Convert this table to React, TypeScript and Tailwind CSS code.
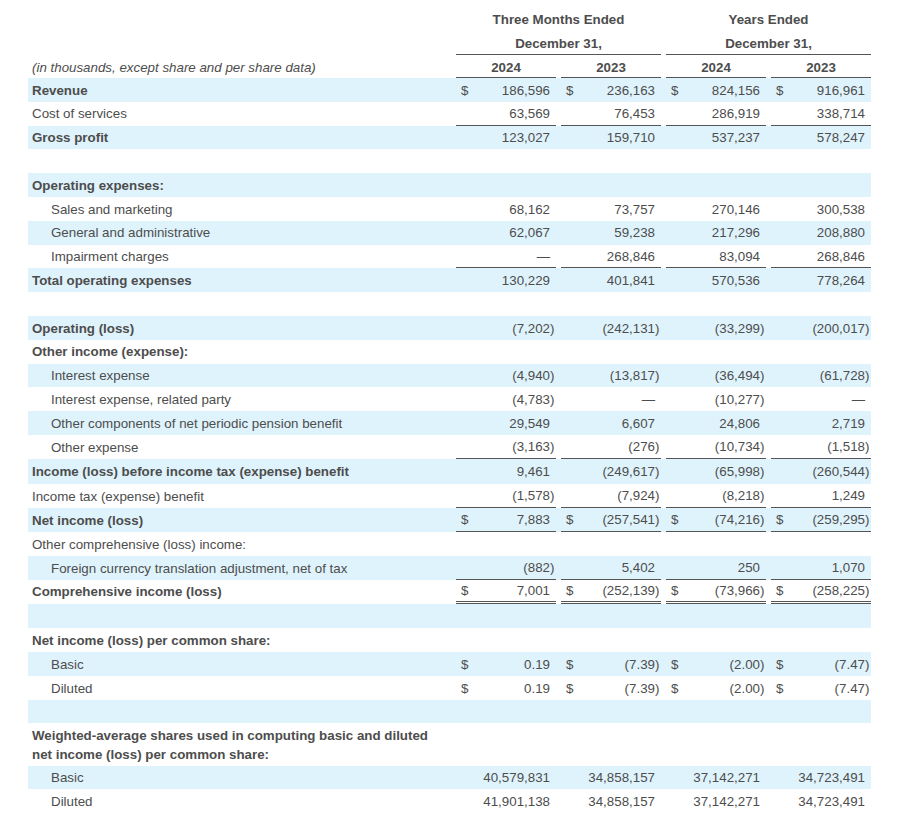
import React from 'react';

type Line = 'single' | 'double';

type Row = {
  label: string;
  bold?: boolean;
  indent?: boolean;
  dollar?: boolean;
  vals?: string[];
  line?: Line;
  h?: string;
};

const rows: Row[] = [
  { label: 'Revenue', bold: true, dollar: true, vals: ['186,596', '236,163', '824,156', '916,961'] },
  { label: 'Cost of services', vals: ['63,569', '76,453', '286,919', '338,714'], line: 'single' },
  { label: 'Gross profit', bold: true, vals: ['123,027', '159,710', '537,237', '578,247'] },
  { label: '' },
  { label: 'Operating expenses:', bold: true },
  { label: 'Sales and marketing', indent: true, vals: ['68,162', '73,757', '270,146', '300,538'] },
  { label: 'General and administrative', indent: true, vals: ['62,067', '59,238', '217,296', '208,880'] },
  { label: 'Impairment charges', indent: true, vals: ['—', '268,846', '83,094', '268,846'], line: 'single' },
  { label: 'Total operating expenses', bold: true, vals: ['130,229', '401,841', '570,536', '778,264'] },
  { label: '' },
  { label: 'Operating (loss)', bold: true, vals: ['(7,202)', '(242,131)', '(33,299)', '(200,017)'] },
  { label: 'Other income (expense):', bold: true },
  { label: 'Interest expense', indent: true, vals: ['(4,940)', '(13,817)', '(36,494)', '(61,728)'] },
  { label: 'Interest expense, related party', indent: true, vals: ['(4,783)', '—', '(10,277)', '—'] },
  { label: 'Other components of net periodic pension benefit', indent: true, vals: ['29,549', '6,607', '24,806', '2,719'] },
  { label: 'Other expense', indent: true, vals: ['(3,163)', '(276)', '(10,734)', '(1,518)'], line: 'single' },
  { label: 'Income (loss) before income tax (expense) benefit', bold: true, h: 'min-h-[24.8px]', vals: ['9,461', '(249,617)', '(65,998)', '(260,544)'] },
  { label: 'Income tax (expense) benefit', h: 'min-h-[24.8px]', vals: ['(1,578)', '(7,924)', '(8,218)', '1,249'], line: 'single' },
  { label: 'Net income (loss)', bold: true, dollar: true, vals: ['7,883', '(257,541)', '(74,216)', '(259,295)'], line: 'single' },
  { label: 'Other comprehensive (loss) income:' },
  { label: 'Foreign currency translation adjustment, net of tax', indent: true, vals: ['(882)', '5,402', '250', '1,070'], line: 'single' },
  { label: 'Comprehensive income (loss)', bold: true, dollar: true, vals: ['7,001', '(252,139)', '(73,966)', '(258,225)'], line: 'double' },
  { label: '', h: 'min-h-[24.2px]' },
  { label: 'Net income (loss) per common share:', bold: true, h: 'min-h-[24.2px]' },
  { label: 'Basic', indent: true, dollar: true, h: 'min-h-[24.2px]', vals: ['0.19', '(7.39)', '(2.00)', '(7.47)'] },
  { label: 'Diluted', indent: true, dollar: true, h: 'min-h-[24.2px]', vals: ['0.19', '(7.39)', '(2.00)', '(7.47)'] },
  { label: '', h: 'min-h-[23px]' },
  { label: 'Weighted-average shares used in computing basic and diluted net income (loss) per common share:', bold: true },
  { label: 'Basic', indent: true, vals: ['40,579,831', '34,858,157', '37,142,271', '34,723,491'] },
  { label: 'Diluted', indent: true, vals: ['41,901,138', '34,858,157', '37,142,271', '34,723,491'] },
];

const cols = 'grid grid-cols-[423px_100px_100px_100px_100px] gap-x-[5px]';

// one figure cell: "$" on the left, number right aligned, closing paren sits in a 6px slot
const NumCell = ({ value, dollar, line }: { value: string; dollar?: boolean; line?: Line }) => {
  const neg = value.startsWith('(');
  const body = neg ? value.slice(0, -1) : value;
  const border =
    line === 'double'
      ? 'border-b-[3px] border-double border-[#555]'
      : line === 'single'
      ? 'border-b border-[#555]'
      : '';
  return (
    <div className={`flex items-center pl-[5px] pt-[0.5px] ${border}`}>
      <span className="w-[10px]">{dollar ? '$' : ''}</span>
      <span className="flex-1 text-right whitespace-nowrap">{body}</span>
      <span className="w-[6px]">{neg ? ')' : ''}</span>
    </div>
  );
};

export default function App() {
  return (
    <div className="min-h-screen bg-white pt-[7px] font-['Liberation_Sans',Arial,sans-serif] text-[13.33px] leading-[19px] text-[#4d4d4d]">
      <div className="ml-[28px] w-[843px]">
        {/* column headings */}
        <div className={`${cols} h-[24px]`}>
          <div />
          <div className="col-span-2 flex items-center justify-center pt-[1px] font-bold">Three Months Ended</div>
          <div className="col-span-2 flex items-center justify-center pt-[1px] font-bold">Years Ended</div>
        </div>
        <div className={`${cols} h-[24px]`}>
          <div />
          <div className="col-span-2 flex items-center justify-center pt-[1px] font-bold border-b border-[#555]">
            December 31,
          </div>
          <div className="col-span-2 flex items-center justify-center pt-[1px] font-bold border-b border-[#555]">
            December 31,
          </div>
        </div>
        <div className={`${cols} h-[23px]`}>
          <div className="flex items-center pl-[4px] pt-[2px] italic">(in thousands, except share and per share data)</div>
          {['2024', '2023', '2024', '2023'].map((y, i) => (
            <div key={i} className="flex items-center justify-center pt-[2px] font-bold border-b border-[#555]">
              {y}
            </div>
          ))}
        </div>

        {/* statement lines */}
        {rows.map((r, i) => (
          <div
            key={i}
            className={`${cols} ${r.h ?? 'min-h-[23.8px]'} ${i % 2 === 0 ? 'bg-[#dff3fc]' : 'bg-white'}`}
          >
            <div
              className={`flex items-center pt-[2.4px] pb-[2px] ${r.indent ? 'pl-[23px]' : 'pl-[4px]'} ${
                r.bold ? 'font-bold' : ''
              }`}
            >
              {r.label}
            </div>
            {r.vals
              ? r.vals.map((v, j) => <NumCell key={j} value={v} dollar={r.dollar} line={r.line} />)
              : [0, 1, 2, 3].map((j) => <div key={j} />)}
          </div>
        ))}
      </div>
    </div>
  );
}
